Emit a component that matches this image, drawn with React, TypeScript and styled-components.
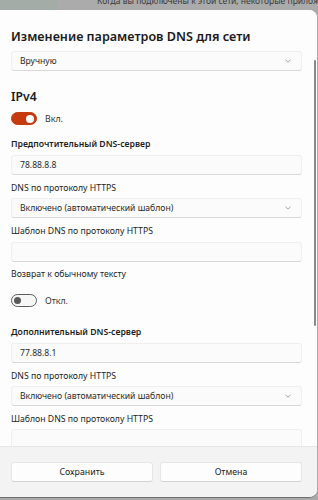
import React from "react";
import styled, { createGlobalStyle } from "styled-components";

const Global = createGlobalStyle`
  html, body { margin: 0; padding: 0; background: #a9a9a9; }
  body { font-family: "Noto Sans", "Open Sans", sans-serif; color: #1b1b1b; }
  * { box-sizing: border-box; }
`;

const Page = styled.div`
  width: 318px;
  height: 500px;
  display: flex;
  flex-direction: column;
  overflow: hidden;
  background: #a9a9a9;
`;

const BackStrip = styled.div`
  height: 10px;
  display: flex;
  overflow: hidden;
  flex: none;
`;

const BackSide = styled.div`
  width: 58px;
  background: #a4aca7;
`;

const BackText = styled.div`
  flex: 1;
  background: #ababab;
  padding-left: 39px;
  font-size: 8.5px;
  line-height: 10px;
  margin-top: -4px;
  color: #3a3a3a;
  white-space: nowrap;
  overflow: hidden;
`;

const Dialog = styled.div`
  width: 317px;
  height: 488px;
  flex: none;
  background: #ffffff;
  border-radius: 0 8px 8px 0;
  border-bottom: 1px solid #6d6d6d;
  display: flex;
  flex-direction: column;
  overflow: hidden;
  position: relative;
`;

const Content = styled.div`
  flex: 1;
  overflow: hidden;
  padding: 17px 15px 0 11px;
  display: flex;
  flex-direction: column;
  background: #fdfdfd;
`;

const ScrollThumb = styled.div`
  position: absolute;
  right: 1px;
  top: 50px;
  width: 2px;
  height: 266px;
  border-radius: 1px;
  background: #8a8a8a;
`;

const Title = styled.div`
  font-size: 12.6px;
  font-weight: 600;
  line-height: 20px;
  color: #1a1a1a;
`;

const Heading = styled.div<{ $mt: number }>`
  margin-top: ${(p) => p.$mt}px;
  font-size: 12.2px;
  font-weight: 600;
  line-height: 18px;
  color: #1a1a1a;
`;

const Label = styled.div<{ $mt: number; $bold?: boolean }>`
  margin-top: ${(p) => p.$mt}px;
  font-size: 8.7px;
  line-height: 14px;
  font-weight: ${(p) => (p.$bold ? 600 : 400)};
  color: #1d1d1d;
`;

const Box = styled.div<{ $mt: number }>`
  margin-top: ${(p) => p.$mt}px;
  height: 20px;
  flex: none;
  border: 1px solid #efefef;
  border-bottom-color: #d9d9d9;
  border-radius: 3px;
  background: #fbfbfb;
  display: flex;
  align-items: center;
  justify-content: space-between;
  padding: 0 10px 0 8px;
  font-size: 8.6px;
  color: #2a2a2a;
`;

const Chevron = styled.svg`
  width: 6px;
  height: 4px;
  flex: none;
`;

const ToggleRow = styled.div<{ $mt: number }>`
  margin-top: ${(p) => p.$mt}px;
  display: flex;
  align-items: center;
  gap: 8px;
  font-size: 8.8px;
  color: #333;
  height: 13px;
`;

const Switch = styled.div<{ $on?: boolean }>`
  width: 26px;
  height: 13px;
  border-radius: 7px;
  flex: none;
  display: flex;
  align-items: center;
  padding: 0 2px;
  justify-content: ${(p) => (p.$on ? "flex-end" : "flex-start")};
  background: ${(p) => (p.$on ? "#c63a0f" : "#f7f7f7")};
  border: 1px solid ${(p) => (p.$on ? "#c63a0f" : "#5c5c5c")};
`;

const Knob = styled.div<{ $on?: boolean }>`
  width: ${(p) => (p.$on ? 8 : 7)}px;
  height: ${(p) => (p.$on ? 8 : 7)}px;
  border-radius: 50%;
  background: ${(p) => (p.$on ? "#ffffff" : "#5a5a5a")};
`;

const Footer = styled.div`
  height: 51px;
  flex: none;
  background: #f3f3f3;
  border-top: 1px solid #e6e6e6;
  display: flex;
  gap: 7px;
  padding: 15px 15px 0 11px;
`;

const Button = styled.button`
  flex: 1;
  height: 20px;
  border: 1px solid #e6e6e6;
  border-bottom-color: #d2d2d2;
  border-radius: 3px;
  background: #fdfdfd;
  font-family: inherit;
  font-size: 8.8px;
  color: #222;
  padding: 0;
`;

const ChevronIcon = () => (
  <Chevron viewBox="0 0 6 4">
    <path d="M0.5 0.8 L3 3.2 L5.5 0.8" fill="none" stroke="#8c8c8c" strokeWidth="0.8" />
  </Chevron>
);

export default function App() {
  return (
    <Page>
      <Global />
      <BackStrip>
        <BackSide />
        <BackText>Когда вы подключены к этой сети, некоторые приложения м</BackText>
      </BackStrip>
      <Dialog>
        <Content>
          <Title>Изменение параметров DNS для сети</Title>
          <Box $mt={4}>
            <span>Вручную</span>
            <ChevronIcon />
          </Box>
          <Heading $mt={17}>IPv4</Heading>
          <ToggleRow $mt={6}>
            <Switch $on>
              <Knob $on />
            </Switch>
            <span>Вкл.</span>
          </ToggleRow>
          <Label $mt={12} $bold>Предпочтительный DNS-сервер</Label>
          <Box $mt={4}>
            <span>78.88.8.8</span>
          </Box>
          <Label $mt={6}>DNS по протоколу HTTPS</Label>
          <Box $mt={3}>
            <span>Включено (автоматический шаблон)</span>
            <ChevronIcon />
          </Box>
          <Label $mt={6}>Шаблон DNS по протоколу HTTPS</Label>
          <Box $mt={4} />
          <Label $mt={5}>Возврат к обычному тексту</Label>
          <ToggleRow $mt={13}>
            <Switch>
              <Knob />
            </Switch>
            <span>Откл.</span>
          </ToggleRow>
          <Label $mt={18} $bold>Дополнительный DNS-сервер</Label>
          <Box $mt={4}>
            <span>77.88.8.1</span>
          </Box>
          <Label $mt={6}>DNS по протоколу HTTPS</Label>
          <Box $mt={3}>
            <span>Включено (автоматический шаблон)</span>
            <ChevronIcon />
          </Box>
          <Label $mt={6}>Шаблон DNS по протоколу HTTPS</Label>
          <Box $mt={3} />
        </Content>
        <ScrollThumb />
        <Footer>
          <Button>Сохранить</Button>
          <Button>Отмена</Button>
        </Footer>
      </Dialog>
    </Page>
  );
}
